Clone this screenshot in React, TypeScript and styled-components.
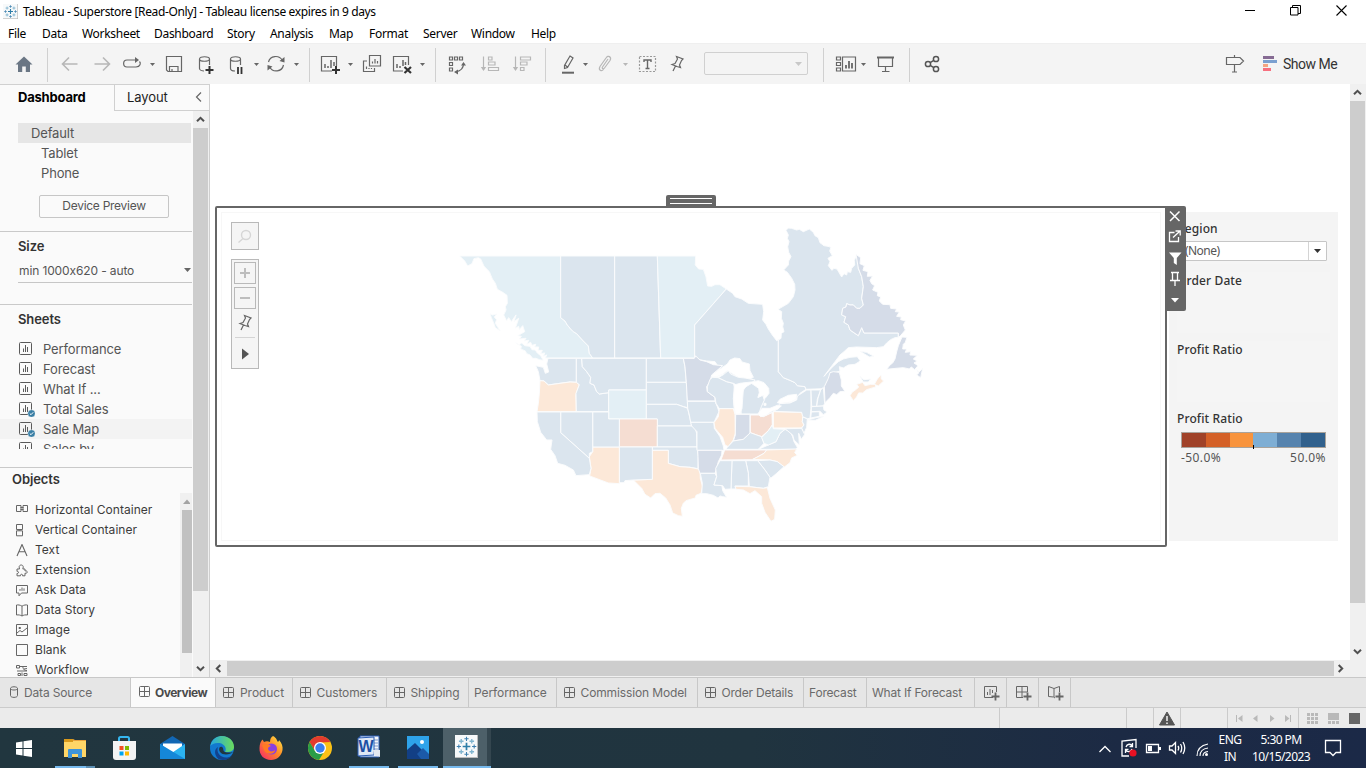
import React from "react";
import styled, { createGlobalStyle, css } from "styled-components";

const ui = `"Noto Sans", "Open Sans", sans-serif`;
const book = `Inter, Roboto, sans-serif`;

const Global = createGlobalStyle`
  * { box-sizing: border-box; }
  body { margin: 0; background: #fff; overflow: hidden; }
  svg { display: block; flex: none; }
`;

/* ---------- window frame ---------- */
const Window = styled.div`
  width: 1366px;
  height: 768px;
  display: flex;
  flex-direction: column;
  background: #fff;
  overflow: hidden;
  font-family: ${book};
  color: #555;
  white-space: nowrap;
`;
const TitleBar = styled.header`
  height: 23px;
  display: flex;
  align-items: center;
  padding: 0 2px 0 3px;
  color: #000;
  font: 12px/22px ${ui};
  letter-spacing: -0.36px;
`;
const Title = styled.span`
  flex: 1;
  margin-left: 5px;
`;
const WinButton = styled.span`
  width: 46px;
  height: 20px;
  display: flex;
  align-items: center;
  justify-content: center;
`;
const MenuBar = styled.nav`
  height: 20px;
  display: flex;
  padding-left: 8px;
  color: #000;
  font: 12px/21px ${ui};
`;
const MenuItem = styled.span<{ $w: number }>`
  width: ${(p) => p.$w}px;
  letter-spacing: -0.3px;
`;

/* ---------- toolbar ---------- */
const Toolbar = styled.div`
  height: 41px;
  display: flex;
  padding: 11px 0 0 14px;
  background: #f4f4f4;
  border-top: 1px solid #efefef;
`;
const Tool = styled.svg.attrs({ height: 20, fill: "none" })<{ $ml?: number; $w?: number; $dim?: boolean }>`
  width: ${(p) => p.$w ?? 20}px;
  margin: -1px 0 0 ${(p) => p.$ml ?? 0}px;
  stroke: ${(p) => (p.$dim ? "#b7b7b7" : "#666")};
  stroke-width: 1.2;
  overflow: visible;
`;
const Divider = styled.span<{ $ml: number }>`
  width: 1px;
  height: 34px;
  margin: -7px 0 0 ${(p) => p.$ml}px;
  background: #d0d0d0;
`;
const Combo = styled.span`
  width: 104px;
  height: 23px;
  margin: -3px 0 0 16px;
  padding: 9px 5px 0 0;
  border: 1px solid #d0d0d0;
  border-radius: 2px;
  display: flex;
  justify-content: flex-end;
`;
const ShowMe = styled.span`
  margin-left: 6px;
  font: 14px/18px Roboto, sans-serif;
  letter-spacing: -0.5px;
  color: #333;
`;

/* ---------- workspace ---------- */
const Workspace = styled.div`
  height: 593px;
  display: flex;
`;
const Sidebar = styled.aside`
  width: 210px;
  display: flex;
  flex-direction: column;
  background: #fafafa;
  border-top: 1px solid #d0d0d0;
  border-right: 1px solid #cfcfcf;
`;
const PaneTabs = styled.div`
  height: 26px;
  display: flex;
  font-size: 13px;
  line-height: 25px;
  color: #1e1e1e;
`;
const PaneTab = styled.div<{ $active?: boolean }>`
  width: ${(p) => (p.$active ? 114 : 95)}px;
  display: flex;
  ${(p) =>
    p.$active
      ? css`
          padding-left: 18px;
          font-weight: 700;
          letter-spacing: -0.2px;
          color: #000;
        `
      : css`
          padding-left: 12px;
          border-left: 1px solid #d0d0d0;
          border-bottom: 1px solid #d0d0d0;
          letter-spacing: -0.1px;
        `}
`;
const PaneBody = styled.div`
  flex: 1;
  display: flex;
  min-height: 0;
`;
const PaneContent = styled.div`
  width: 192px;
  margin-right: 1px;
  display: flex;
  flex-direction: column;
  overflow: hidden;
`;
const Section = styled.section<{ $h: number; $pt?: number }>`
  height: ${(p) => p.$h}px;
  padding-top: ${(p) => p.$pt ?? 0}px;
  border-bottom: 1px solid #c9c9c9;
  overflow: hidden;
  flex: none;
`;
const Device = styled.div<{ $active?: boolean }>`
  height: 20px;
  margin: 0 1px 0 18px;
  padding-left: ${(p) => (p.$active ? 13 : 23)}px;
  background: ${(p) => (p.$active ? "#e6e6e6" : "transparent")};
  font-size: 13px;
  line-height: 20px;
  letter-spacing: -0.15px;
`;
const PreviewButton = styled.div`
  width: 130px;
  height: 23px;
  margin: 12px 0 0 39px;
  border: 1px solid #c6c6c6;
  border-radius: 2px;
  text-align: center;
  font-size: 12px;
  line-height: 20px;
  letter-spacing: -0.28px;
`;
const Heading = styled.h3<{ $ml?: number; $mt?: number }>`
  margin: ${(p) => p.$mt ?? 0}px 0 0 ${(p) => p.$ml ?? 18}px;
  font-size: 13px;
  line-height: 28px;
  font-weight: 600;
  letter-spacing: -0.1px;
  color: #333;
`;
const SizeSelect = styled.div`
  height: 23px;
  margin: 0 0 0 18px;
  padding: 0 1px 2px;
  display: flex;
  justify-content: space-between;
  align-items: center;
  border-bottom: 1px solid #c6c6c6;
  font-size: 12px;
  letter-spacing: -0.12px;
`;
const SheetList = styled.div`
  height: 110px;
  margin-top: 6px;
  overflow: hidden;
`;
const Sheet = styled.div<{ $hover?: boolean }>`
  height: 20px;
  padding-left: 19px;
  display: flex;
  align-items: center;
  gap: 8px;
  background: ${(p) => (p.$hover ? "#f3f3f3" : "transparent")};
  font-size: 13px;
  line-height: 20px;
  letter-spacing: -0.12px;
`;
const ObjectArea = styled.div`
  flex: 1;
  min-height: 0;
  display: flex;
  justify-content: space-between;
`;
const ObjectList = styled.div`
  padding-top: 7px;
`;
const ObjectRow = styled.div`
  height: 20px;
  padding-left: 15px;
  display: flex;
  align-items: center;
  gap: 6px;
  font-size: 12px;
  line-height: 20px;
  letter-spacing: 0.03px;
  color: #3c3c3c;
`;
const VScroll = styled.div<{ $w: number }>`
  width: ${(p) => p.$w}px;
  display: flex;
  flex-direction: column;
  background: #f0f0f0;
`;
const Arrow = styled.span<{ $w?: number; $h?: number; $pr?: number }>`
  width: ${(p) => (p.$w ? p.$w + "px" : "auto")};
  height: ${(p) => p.$h ?? 16}px;
  padding-right: ${(p) => p.$pr ?? 0}px;
  display: flex;
  align-items: center;
  justify-content: center;
`;
const Thumb = styled.span<{ $h?: number; $ml?: number; $mr?: number; $c?: string }>`
  ${(p) => (p.$h ? `height: ${p.$h}px;` : "flex: 1;")}
  margin: 0 ${(p) => p.$mr ?? 0}px 0 ${(p) => p.$ml ?? 0}px;
  background: ${(p) => p.$c ?? "#cdcdcd"};
`;
const Grow = styled.span`
  flex: 1;
`;

/* ---------- dashboard canvas ---------- */
const Main = styled.main`
  flex: 1;
  display: flex;
  flex-direction: column;
`;
const CanvasRow = styled.div`
  height: 576px;
  display: flex;
`;
const Canvas = styled.div`
  width: 1140px;
  display: flex;
  align-items: flex-start;
  padding: 122px 0 0 5px;
`;
const Zone = styled.div`
  position: relative;
  width: 952px;
  height: 341px;
  border: 2px solid #666;
  border-radius: 2px;
`;
const ZoneInner = styled.div`
  height: 329px;
  margin: 4px;
  border: 1px solid #f7f7f7;
`;
const Handle = styled.div`
  position: absolute;
  left: 449px;
  top: -13px;
  width: 50px;
  height: 12px;
  padding: 3px 4px;
  display: flex;
  flex-direction: column;
  justify-content: space-between;
  background: #666;
  border-radius: 2px 2px 0 0;
`;
const HandleLine = styled.span`
  height: 1px;
  background: #fff;
`;
const ZoneTools = styled.div`
  position: absolute;
  left: 948px;
  top: -2px;
  width: 21px;
  height: 105px;
  background: #666;
  border-radius: 0 2px 2px 0;
  z-index: 2;
  display: flex;
  justify-content: center;
`;
const MapControls = styled.div`
  position: absolute;
  left: 14px;
  top: 14px;
  width: 28px;
  display: flex;
  flex-direction: column;
  gap: 9px;
`;
const ControlBox = styled.div<{ $h: number }>`
  height: ${(p) => p.$h}px;
  padding-top: 2px;
  display: flex;
  flex-direction: column;
  align-items: center;
  gap: 3px;
  background: #f5f5f5;
  border: 1px solid #b9b9b9;
`;
const ZoomButton = styled.span`
  width: 22px;
  height: 22px;
  display: flex;
  align-items: center;
  justify-content: center;
  border: 1px solid #b9b9b9;
`;
const ControlRule = styled.span`
  width: 20px;
  height: 1px;
  background: #d4d4d4;
`;
const Filters = styled.div`
  width: 169px;
  height: 329px;
  margin: 6px 0 0 2px;
  padding: 8px 8px 0;
  background: #f4f4f4;
  font-family: ${ui};
`;
const Card = styled.div<{ $h: number }>`
  height: ${(p) => p.$h}px;
  margin-bottom: 8px;
  background: #f5f5f5;
`;
const CardTitle = styled.div`
  font-size: 12px;
  line-height: 18px;
  font-weight: 500;
  letter-spacing: 0.12px;
  color: #333;
`;
const Dropdown = styled.div`
  width: 150px;
  height: 20px;
  margin-top: 3px;
  padding-left: 7px;
  display: flex;
  justify-content: space-between;
  background: #fff;
  border: 1px solid #c6c6c6;
  border-radius: 1px;
  font-size: 12px;
  line-height: 17px;
  letter-spacing: -0.55px;
  color: #555;
`;
const DropArrow = styled.span`
  width: 18px;
  display: flex;
  align-items: center;
  justify-content: center;
  border-left: 1px solid #d4d4d4;
`;
const Ramp = styled.div`
  position: relative;
  width: 145px;
  height: 16px;
  margin: 4px 0 0 4px;
  display: flex;
  border: 1px solid #a9a39b;
`;
const RampStep = styled.span<{ $c: string }>`
  flex: 1;
  background: ${(p) => p.$c};
`;
const RampMark = styled.span`
  position: absolute;
  left: 71px;
  top: 12px;
  width: 1px;
  height: 4px;
  background: #000;
`;
const RampLabels = styled.div`
  width: 145px;
  margin-left: 4px;
  display: flex;
  justify-content: space-between;
  font-size: 12px;
  line-height: 19px;
  letter-spacing: 0.42px;
  color: #555;
`;
const HScroll = styled.div`
  height: 17px;
  display: flex;
  padding: 1px 0;
  background: #f0f0f0;
`;

/* ---------- sheet tabs, status bar ---------- */
const SheetTabs = styled.div`
  height: 31px;
  display: flex;
  background: #e6e6e6;
  border-top: 1px solid #c8c8c8;
  border-bottom: 1px solid #cbcbcb;
`;
const SheetTab = styled.div<{ $w: number; $pl: number; $active?: boolean; $ls?: number }>`
  width: ${(p) => p.$w}px;
  padding-left: ${(p) => p.$pl}px;
  padding-bottom: ${(p) => (p.$active ? 1 : 0)}px;
  display: flex;
  align-items: center;
  gap: ${(p) => (p.$active ? 4 : 5)}px;
  background: ${(p) => (p.$active ? "#fafafa" : "transparent")};
  border-right: 1px solid #c8c8c8;
  font-size: 12px;
  font-weight: ${(p) => (p.$active ? 700 : 400)};
  letter-spacing: ${(p) => p.$ls ?? 0}px;
  color: ${(p) => (p.$active ? "#4b4b4b" : "#6a6a6a")};
`;
const StatusBar = styled.div`
  height: 20px;
  display: flex;
  background: #ebebeb;
`;
const StatusCell = styled.div<{ $w: number }>`
  width: ${(p) => p.$w}px;
  display: flex;
  align-items: center;
  justify-content: center;
  border-right: 1px solid #cbcbcb;
  &:last-child { border: 0; }
`;

/* ---------- Windows taskbar ---------- */
const Taskbar = styled.footer`
  height: 40px;
  display: flex;
  background: linear-gradient(90deg, #21363f 0%, #20343f 55%, #1c2a44 82%, #1b2947 100%);
  color: #fff;
`;
const Start = styled.div`
  width: 50px;
  padding: 12px 0 0 16px;
`;
const TaskItem = styled.div<{ $active?: boolean }>`
  width: 49px;
  display: flex;
  flex-direction: column;
  align-items: center;
  justify-content: space-between;
  padding-top: 7px;
  ${(p) => p.$active && css`background: linear-gradient(90deg, transparent 1px, #4d6069 1px 45px, #34464f 45px);`}
`;
const Underline = styled.span<{ $w: number; $split?: boolean }>`
  width: ${(p) => p.$w}px;
  height: 2px;
  background: ${(p) => (p.$split ? "linear-gradient(90deg, #76b9ed 31px, #5c8fb4 31px)" : "#76b9ed")};
`;
const Tray = styled.div`
  display: flex;
  align-items: center;
  width: 267px;
  margin-left: auto;
`;
const TrayText = styled.div<{ $w: number; $ls: number; $ml: number }>`
  width: ${(p) => p.$w}px;
  margin-left: ${(p) => p.$ml}px;
  font: 12px/17px ${ui};
  letter-spacing: ${(p) => p.$ls}px;
  text-align: center;
`;
const NoticeIcon = styled.svg`
  margin-left: 12px;
`;

/* ---------- small drawings ---------- */
const Caret = ({ c = "#666" }: { c?: string }) => (
  <svg width="7" height="4" viewBox="0 0 7 4">
    <path d="M0 0H7L3.5 4Z" fill={c} />
  </svg>
);
const ToolCaret = ({ ml, dim }: { ml: number; dim?: boolean }) => (
  <Tool $ml={ml} $w={7} viewBox="0 0 7 20">
    <path d="M1 9H6L3.5 12Z" fill={dim ? "#b7b7b7" : "#666"} stroke="none" />
  </Tool>
);
const Chevron = ({ dir }: { dir: "up" | "down" | "left" | "right" }) => {
  const r = { up: 0, right: 90, down: 180, left: 270 }[dir];
  return (
    <svg width="9" height="9" viewBox="0 0 9 9" fill="none" stroke="#505050" strokeWidth="2">
      <path d="M1 6.3L4.5 2.8L8 6.3" transform={`rotate(${r} 4.5 4.5)`} />
    </svg>
  );
};
const SheetGlyph = ({ used }: { used?: boolean }) => (
  <svg width="16" height="16" viewBox="0 0 16 16" fill="none" stroke="#5a5a5a">
    <rect x="0.5" y="1.5" width="12" height="12" rx="1" />
    <path d="M4.5 11V7.5M6.5 11V4M8.5 11V6" />
    {used && (
      <g>
        <circle cx="12.5" cy="12.5" r="3.8" fill="#3a7fa5" stroke="#fafafa" strokeWidth=".5" />
        <path d="M10.8 12.5l1.2 1.2 2.2-2.4" stroke="#fff" />
      </g>
    )}
  </svg>
);
const GridGlyph = () => (
  <svg width="12" height="12" viewBox="0 0 12 12" fill="none" stroke="#666">
    <rect x=".5" y=".5" width="10" height="10" rx="1" />
    <path d="M5.5 0V11M0 5.5H11" />
  </svg>
);
const plus = (x: number, y: number, k: number) => `M${x - k} ${y}H${x + k}M${x} ${y - k}V${y + k}`;
const TableauMark = ({ s }: { s: number }) => (
  <svg width={s} height={s} viewBox="0 0 24 24" fill="none">
    <rect width="24" height="24" fill="#b9b9b9" />
    <rect width="23" height="23" fill="#f7f9fa" />
    <path d={plus(12, 12, 4)} stroke="#2e7ea8" strokeWidth="1.8" />
    <path d={plus(12, 4, 2.2) + plus(12, 20, 2.2) + plus(4, 12, 2.2) + plus(20, 12, 2.2)} stroke="#3d7fae" strokeWidth="1.1" />
    <path d={plus(6.5, 6.5, 2.4) + plus(17.5, 6.5, 2.4) + plus(6.5, 17.5, 2.4) + plus(17.5, 17.5, 2.4)} stroke="#7fb4cf" strokeWidth="1.4" />
  </svg>
);
const pinPath = "M8.500 2.500L15 5L13.500 6.500L11.500 11L12.500 13.500L9 12.500L4 10.500L7 9.500L9.500 5ZM7.500 12L5 17";

const objectGlyphs: Record<string, React.ReactNode> = {
  "Horizontal Container": <path d="M.5 1.500h4.500v6H.5zM7 1.500h4.500v6H7zM4.500 3.500h3M4.500 5.500h3" />,
  "Vertical Container": <path d="M.5 .5h6v5h-6zM.5 6.800h6v5h-6zM2.500 6h2" />,
  Text: <path d="M1 12L6 .5L11 12M3 7.800H9" strokeWidth="1.100" />,
  Extension: <path d="M1 5h2.500C3.500 4.500 3 3.500 3.200 2.500C3.600.5 6.800.5 7.200 2.500C7.400 3.500 7 4.500 6.800 5H9v2c3-1 3 3 0 2.200v2.600H6.500c.8-2-2.600-2-2 0H1V9.400c2 .6 2-2.600 0-2z" />,
  "Ask Data": <path d="M.5 1.500h11v7.500H5.500L3 11.800V9H.5zM4 6.800V5M6 6.800V3.500M8 6.800V4.400" />,
  "Data Story": <path d="M6 2.200C4 .8 2 .8.5 1v10c2-.3 4 0 5.500 1c1.500-1 3.500-1.300 5.500-1V1C10 .8 8 .8 6 2.200zM6 2.200V12" />,
  Image: <path d="M.5.5h11v11H.5zM1 9l3-2.500 2 1.500 5-4M3 3.500h1.500v1H3z" />,
  Blank: <path d="M.5.5h11v11H.5z" />,
  Workflow: <path d="M.5 1.500h3v2.500h-3zM3.500 2.500H11M5.500 2.500c3 0 0 4 5.500 4M11 4.500L8 5M1 7h10M2 9.500h2.500v2H2zM6 8.500v3.500M8 9.500h3v2H8z" />,
};

/* ---------- map ---------- */
const BLUE = "#dbe5ee";
const ICE = "#e3eff5";
const LILAC = "#d5dce8";
const PEACH = "#fce8d8";
const ROSE = "#f5ddd2";
type Shape = [string, string];

const westCanada: Shape[] = [
  [ICE, "29,123 332,123 332,308 345,318 352,330 362,342 370,350 380,356 400,378 415,393 418,415 428,429 286,429 290,420 280,424 284,414 272,416 277,406 264,406 266,396 254,396 257,388 246,391 242,382 230,388 236,376 222,378 228,370 208,372 214,364 203,362 224,350 218,332 208,344 206,334 196,340 206,310 192,320 198,300 184,320 176,308 170,318 161,300 168,285 166,275 172,265 171,241 158,232 142,223 136,205 127,192 118,170 102,154 92,132 85,128 72,131 66,146 53,153 44,138"],
  [ICE, "197,383 206,390 215,384 225,392 240,394 246,404 256,405 262,414 272,422 280,436 268,434 258,430 248,430 240,420 230,416 226,408 212,402 214,394"],
  [ICE, "120,296 128,300 141,297 133,306 140,314 136,325 151,348 136,338 130,322 124,308"],
  [BLUE, "332,123 494,123 494,429 428,429 418,415 415,393 400,378 380,356 370,350 362,342 352,330 345,318 332,308"],
  [BLUE, "494,123 622,123 632,429 494,429"],
];
const eastCanada: Shape[] = [
  [ICE, "-68,123 47,123 46,150 56,162 70,163 78,185 83,213 95,214 105,209 120,209 139,222 44,330 44,429 -58,429"],
  [BLUE, "139,222 158,235 165,245 185,252 205,265 248,268 251,290 248,315 258,328 265,342 277,360 290,377 295,374 295,470 310,488 330,496 345,503 352,512 375,515 378,523 360,535 355,545 302,580 262,600 235,590 200,540 210,500 130,480 105,440 80,438 62,435 50,434 47,424 44,424 44,330"],
  [BLUE, "318,46 325,39 335,40 350,45 358,43 370,50 388,42 400,52 405,62 415,68 420,83 432,92 444,94 453,97 449,108 457,122 444,130 450,140 445,152 456,166 462,160 471,162 485,186 492,176 500,180 502,170 512,172 515,160 524,150 523,136 530,120 537,130 535,160 545,185 550,215 545,250 550,270 540,280 530,280 520,270 510,270 500,266 498,276 488,280 485,300 497,305 492,322 505,330 510,345 535,362 545,338 552,354 655,354 655,367 645,368 632,374 620,384 610,395 590,398 530,396 505,398 492,410 480,420 465,440 432,484 455,458 475,440 490,432 510,427 532,425 541,438 525,448 505,450 490,459 478,455 480,468 460,475 447,495 437,515 430,521 378,523 375,515 352,512 345,503 330,496 310,488 295,470 295,375 303,370 304,355 312,350 308,335 310,325 304,310 305,290 294,283 325,265 340,245 345,225 344,208 335,190 322,172 311,165 325,150 326,138 333,125 326,112 323,95 327,80 322,70 325,60"],
  [BLUE, "540,409 560,412 582,424 568,426"],
  [BLUE, "540,484 552,494 572,492 565,501 550,501"],
  [LILAC, "528,118 542,128 540,146 553,152 549,166 564,170 562,184 578,183 570,196 575,206 584,212 578,225 594,232 592,242 602,246 598,258 608,268 630,269 632,280 650,282 646,290 658,291 650,304 664,306 662,314 677,318 670,330 676,345 660,364 655,366 655,354 552,354 545,338 535,362 510,345 505,330 492,322 497,305 485,300 488,280 498,276 500,266 510,270 520,270 530,280 540,280 550,270 545,250 550,215 545,185 535,160"],
  [LILAC, "666,366 681,367 676,382 670,388 668,402 680,402 676,412 692,410 690,420 712,421 700,432 712,438 702,444 714,452 704,464 694,456 688,462 670,458 648,460 620,463 630,450 638,444 645,432 650,410 655,392"],
  [LILAC, "710,463 716,472 728,460 722,488 710,480 716,474"],
  [PEACH, "510,542 516,532 530,522 536,516 530,508 548,502 555,512 572,508 586,508 587,516 560,524 548,534 536,534 530,546 520,557"],
  [PEACH, "583,508 592,492 603,479 604,492 611,498 595,513"],
];
const westStates: Shape[] = [
  [BLUE, "84,55 169,55 169,127 150,126 120,130 85,135 72,123 60,122 55,95 47,77 70,82 76,100 86,96 80,72"],
  [PEACH, "60,122 72,123 85,135 120,130 150,126 169,127 178,134 170,155 168,165 169,215 51,215 55,190 58,160"],
  [BLUE, "169,55 185,55 187,80 200,95 212,112 210,130 222,135 230,155 238,162 266,158 266,215 169,215 168,160 178,134 169,127"],
  [BLUE, "185,55 379,55 379,150 266,150 266,158 238,162 230,155 222,135 210,130 212,112 200,95 187,80"],
  [ICE, "266,150 379,150 379,237 266,237"],
  [BLUE, "379,55 490,55 495,80 499,127 379,127"],
  [BLUE, "379,127 499,127 501,150 503,203 490,200 470,193 379,193"],
  [BLUE, "379,193 470,193 490,200 503,205 510,235 515,258 412,258 412,237 379,237"],
  [ROSE, "298,237 412,237 412,321 298,321"],
  [BLUE, "412,258 515,258 525,264 530,280 531,321 412,321"],
  [BLUE, "397,321 531,321 535,350 534,386 510,382 480,380 445,370 445,331 397,331"],
  [PEACH, "397,331 445,331 445,370 480,380 510,382 540,388 541,415 548,440 543,460 528,466 526,474 515,477 498,482 490,490 484,505 487,529 475,527 458,519 450,495 437,474 420,460 405,461 392,474 375,463 365,445 340,420 397,418"],
  [BLUE, "298,321 397,321 397,418 342,420 315,422 312,428 298,428"],
  [PEACH, "218,321 298,321 298,431 265,429 209,408 213,385 208,350 218,335"],
  [BLUE, "218,216 266,216 266,237 298,237 298,321 218,321"],
  [BLUE, "122,216 218,216 218,335 208,340 208,355 122,278"],
  [BLUE, "51,216 122,216 122,278 208,355 213,385 208,404 168,407 160,390 135,376 113,370 105,347 92,328 96,300 80,300 62,277 52,245"],
  [LILAC, "490,55 523,55 527,48 540,60 560,65 580,74 608,77 575,105 570,125 560,140 562,155 585,172 585,183 502,183 499,127 495,80"],
  [BLUE, "502,184 585,184 592,200 597,215 590,230 582,247 512,247 508,225 503,205"],
  [BLUE, "512,247 582,247 583,265 600,290 610,318 612,331 531,331 531,275 515,258"],
  [LILAC, "533,331 606,331 605,345 595,365 590,385 585,400 540,400 535,386 534,350"],
  [BLUE, "541,400 585,400 590,410 582,435 606,437 608,452 620,472 608,470 600,468 594,474 580,466 560,461 545,461 547,430"],
];
const eastStates: Shape[] = [
  [BLUE, "52,140 60,118 68,112 85,113 110,125 130,130 135,145 130,175 133,206 88,206 78,190 75,172 52,155"],
  [BLUE, "85,113 100,104 115,92 122,102 145,112 165,114 195,120 190,128 160,130 145,138 130,130 110,125"],
  [BLUE, "154,222 150,195 153,165 165,140 180,128 198,136 210,148 210,160 204,172 216,164 224,178 214,200 206,222"],
  [PEACH, "88,206 130,206 135,222 136,280 130,300 115,320 105,315 98,292 75,265 72,248 85,230"],
  [LILAC, "137,223 180,223 180,280 160,298 130,303 136,285"],
  [ROSE, "181,225 205,225 220,230 246,218 247,255 235,272 215,290 200,285 181,278"],
  [PEACH, "250,215 335,217 340,230 337,245 342,255 335,264 250,264"],
  [BLUE, "108,328 112,322 130,303 160,298 181,278 200,285 215,290 222,310 205,328"],
  [BLUE, "205,328 235,315 258,305 270,280 285,268 300,275 308,290 312,305 322,322 318,328"],
  [BLUE, "285,266 335,265 345,282 334,298 326,280 328,315 312,300 308,285"],
  [ICE, "247,255 250,266 285,268 270,280 258,305 235,315 222,310 215,293 235,272"],
  [BLUE, "338,231 352,236 350,262 342,280 335,264 342,255 337,245"],
  [BLUE, "250,214 265,205 268,191 300,189 320,180 322,168 350,150 363,150 363,205 360,235 352,236 338,230 335,217"],
  [BLUE, "363,150 392,150 382,178 380,199 365,199"],
  [BLUE, "392,150 400,142 404,190 400,198 380,199 384,175"],
  [BLUE, "364,200 400,198 402,210 412,216 400,224 390,214 364,215"],
  [BLUE, "364,216 388,215 388,229 362,234"],
  [BLUE, "352,240 378,233 402,229 376,241"],
  [LILAC, "405,188 403,140 415,115 420,98 430,95 448,97 454,120 454,138 465,154 450,155 440,164 430,160 420,173"],
  [ROSE, "104,330 230,330 222,340 204,350 188,359 93,360"],
  [PEACH, "230,330 320,327 314,338 322,346 305,354 300,368 282,382 262,365 240,360 188,358 204,350 222,340"],
  [BLUE, "203,362 240,360 262,365 282,380 260,400 242,415 225,390"],
  [BLUE, "167,362 203,362 225,390 240,412 235,440 220,445 178,440 175,400"],
  [BLUE, "126,362 167,362 175,400 175,438 135,438 140,447 123,447"],
  [BLUE, "90,362 126,362 123,447 105,448 98,437 72,435 80,410 77,385"],
  [PEACH, "135,439 178,440 220,445 232,443 240,475 256,510 254,538 243,544 225,517 215,490 215,470 195,452 180,461 160,450 138,448"],
];
const superior: Shape = ["#fff", "60,112 74,98 95,84 112,72 120,60 134,54 150,56 156,66 178,72 180,92 190,112 172,120 145,112 126,100 112,92 98,102 80,110"];
const lakes: Shape[] = [
  ["#fff", "133,135 150,130 185,126 205,122 222,128 236,145 237,160 228,172 222,178 220,165 210,170 204,172 208,158 206,145 185,130 168,140 160,150 158,175 156,205 150,222 136,222 132,195 131,170"],
  ["#fff", "204,222 216,205 240,205 262,196 274,198 262,208 245,214 228,226 212,230"],
  ["#fff", "262,188 270,178 295,166 320,163 318,178 300,186 272,190"],
  ["#fff", "222,190 228,190 228,196 222,196"],
];
const Region = ({ items, x, y }: { items: Shape[]; x: number; y: number }) => (
  <g transform={`translate(${x} ${y}) scale(.33333)`}>
    {items.map(([fill, pts], i) => (
      <polygon key={i} points={pts} fill={fill} />
    ))}
  </g>
);
const RegionMap = () => (
  <svg width="938" height="327" viewBox="222 213 938 327" stroke="#fbfcfd" strokeWidth="3" strokeLinejoin="round">
    <Region items={westCanada} x={450} y={215} />
    <Region items={eastCanada} x={680} y={215} />
    <Region items={[superior]} x={690} y={340} />
    <Region items={westStates} x={520} y={340} />
    <Region items={eastStates} x={690} y={340} />
    <Region items={lakes} x={690} y={340} />
  </svg>
);

const menus: [string, number][] = [
  ["File", 34], ["Data", 40], ["Worksheet", 72], ["Dashboard", 73], ["Story", 43], ["Analysis", 59],
  ["Map", 40], ["Format", 54], ["Server", 48], ["Window", 60], ["Help", 40],
];
const tabs: { label: string; w: number; pl?: number; grid?: boolean; active?: boolean; ls?: number }[] = [
  { label: "Overview", w: 85, pl: 8, grid: true, active: true, ls: -0.5 },
  { label: "Product", w: 77, grid: true, pl: 7, ls: -0.05 },
  { label: "Customers", w: 94, grid: true, ls: -0.1 },
  { label: "Shipping", w: 82, grid: true, ls: -0.1 },
  { label: "Performance", w: 88, pl: 5, ls: -0.08 },
  { label: "Commission Model", w: 141, grid: true, ls: -0.13 },
  { label: "Order Details", w: 106, grid: true, ls: -0.2 },
  { label: "Forecast", w: 63, pl: 5, ls: -0.2 },
  { label: "What If Forecast", w: 108, pl: 5, ls: -0.2 },
];

export default function App() {
  return (
    <Window>
      <Global />
      <TitleBar>
        <TableauMark s={15} />
        <Title>Tableau - Superstore [Read-Only] - Tableau license expires in 9 days</Title>
        <WinButton><svg width="11" height="11" stroke="#000"><path d="M1 4.500H11" /></svg></WinButton>
        <WinButton>
          <svg width="11" height="13" fill="none" stroke="#000"><path d="M.5 2.500h7.500v7.500H.5zM2.500 2.500V.5h8v8H8" /></svg>
        </WinButton>
        <WinButton><svg width="11" height="13" stroke="#000" strokeWidth="1.100"><path d="M.5.5L10.500 10.500M10.500.5L.5 10.500" /></svg></WinButton>
      </TitleBar>
      <MenuBar>
        {menus.map(([m, w]) => <MenuItem key={m} $w={w}>{m}</MenuItem>)}
      </MenuBar>

      <Toolbar>
        <Tool viewBox="0 0 20 20"><path d="M10 2.500L18.500 10.500H16V18H11.800V12.500H8.200V18H4V10.500H1.500Z" fill="#6a7684" stroke="none" /></Tool>
        <Divider $ml={13} />
        <Tool $ml={12} $dim viewBox="0 0 20 20"><path d="M17.500 10H3M9 3.500L2.500 10L9 16.500" strokeWidth="1.600" /></Tool>
        <Tool $ml={12} $dim viewBox="0 0 20 20"><path d="M2.500 10H17M11 3.500L17.500 10L11 16.500" strokeWidth="1.600" /></Tool>
        <Tool $ml={10} viewBox="0 0 20 20">
          <path d="M14 6H5C.5 6 .5 13 5 13H14C18.500 13 19 9 17.500 7.500" /><path d="M13 3L17 6L13 9Z" fill="#666" stroke="none" />
        </Tool>
        <ToolCaret ml={7} />
        <Tool $ml={8} viewBox="0 0 20 20"><path d="M2.500 2.500H17.500V17.500H4L2.500 16ZM5.500 17.500V12.500H14V17.500M8 15V17.500" /></Tool>
        <Tool $ml={12} viewBox="0 0 20 20">
          <path d="M3.500 5V14.500C3.500 16 6 17 8 17M13.500 5V11M3.500 5C3.500 2 13.500 2 13.500 5C13.500 8 3.500 8 3.500 5Z" />
          <path d="M13.500 12V20M9.500 16H17.500" stroke="#333" strokeWidth="2" />
        </Tool>
        <Tool $ml={12} viewBox="0 0 20 20">
          <path d="M2.500 5V14.500C2.500 16 4 17 7 17M12.500 5V11M2.500 5C2.500 2 12.500 2 12.500 5C12.500 8 2.500 8 2.500 5Z" />
          <path d="M10 13V20M13.500 13V20" stroke="#333" strokeWidth="1.800" />
        </Tool>
        <ToolCaret ml={5} />
        <Tool $ml={6} viewBox="0 0 20 20">
          <path d="M2.500 8C4 1.500 13 .5 16.500 6.500M17.500 11C16 18 7 19 3.500 13" />
          <path d="M18.500 3V8.500L13.500 7ZM1.500 16.500V11L6.500 12.500Z" fill="#666" stroke="none" />
        </Tool>
        <ToolCaret ml={7} />
        <Divider $ml={9} />
        <Tool $ml={10} $w={22} viewBox="0 0 22 20">
          <path d="M12 17H1.500V2.500H16.500V12" /><path d="M5 14V10M8 14V12M11 14V6M14 12V8" strokeWidth="1.500" />
          <path d="M16 12V20M12 16H20" stroke="#333" strokeWidth="2" />
        </Tool>
        <ToolCaret ml={5} />
        <Tool $ml={8} viewBox="0 0 20 20">
          <path d="M7.500 1.500H18.500V12H7.500ZM5 7H1.500V17.500H12.500V14M10.500 9.500V7.500M13 9.500V5M15.500 9.500V7M4.500 15V12.500M7 15V14M9.500 15V14" />
        </Tool>
        <Tool $ml={10} $w={22} viewBox="0 0 22 20">
          <path d="M11 17H1.500V2.500H16.500V11" /><path d="M5 14V10M8 14V12M11 12V6M13.500 11V8" strokeWidth="1.500" />
          <path d="M12.500 13L19 19M19 13L12.500 19" stroke="#333" strokeWidth="2.200" />
        </Tool>
        <ToolCaret ml={5} />
        <Divider $ml={9} />
        <Tool $ml={11} viewBox="0 0 20 20">
          <path d="M2.500 3H5.500V6H2.500ZM7.500 3H10.500V6H7.500ZM12.500 3H15.500V6H12.500ZM2.500 8.500H5.500V11.500H2.500ZM2.500 14H5.500V17H2.500ZM16.500 9.500C16.500 14 13.500 17 9 18" />
          <path d="M14 11.500L16.500 8L19 11.500ZM11 15.500L7 18L11 20.500Z" fill="#666" stroke="none" />
        </Tool>
        <Tool $ml={13} $dim viewBox="0 0 20 20">
          <path d="M3.500 2.500V15M8.500 3H12V6H8.500ZM8.500 8H15V11H8.500ZM8.500 13.500H18.500V16.500H8.500Z" /><path d="M.8 13H6.200L3.500 17Z" fill="#b7b7b7" stroke="none" />
        </Tool>
        <Tool $ml={12} $dim viewBox="0 0 20 20">
          <path d="M3.500 2.500V15M8.500 3H18.500V6H8.500ZM8.500 8H15V11H8.500ZM8.500 13.500H12V16.500H8.500Z" /><path d="M.8 13H6.200L3.500 17Z" fill="#b7b7b7" stroke="none" />
        </Tool>
        <Divider $ml={13} />
        <Tool $ml={12} viewBox="0 0 20 20">
          <path d="M12 2L15 4L9.500 13.500L6.500 14.500V11.500ZM7 11L9.500 13" /><path d="M4 18.700H16" strokeWidth="2" />
        </Tool>
        <ToolCaret ml={4} />
        <Tool $ml={6} $dim viewBox="0 0 20 20">
          <path d="M13 5L7.500 13C6.500 14.500 8.500 15.500 9.500 14L15 6.500C17 3 13 .5 11 4L5 12.500C3 16 6.500 18 8.500 15.500" />
        </Tool>
        <ToolCaret ml={7} dim />
        <Tool $ml={9} viewBox="0 0 20 20">
          <path d="M1.500 2.500H17.500V17.500H1.500Z" stroke="#999" strokeDasharray="2 1.500" /><path d="M6 8V6H13V8M9.500 6V14.500M7.500 14.500H11.500" strokeWidth="1.400" />
        </Tool>
        <Tool $ml={10} viewBox="0 0 20 20"><path d={pinPath} /></Tool>
        <Combo><Caret c="#c8c8c8" /></Combo>
        <Divider $ml={15} />
        <Tool $ml={12} viewBox="0 0 20 20">
          <path d="M.5 3H4.500V6H.5ZM.5 8.500H4.500V11.500H.5ZM.5 14H4.500V17H.5ZM6.500 3H19.500V17H6.500Z" /><path d="M10 14.500V11M13 14.500V7M16 14.500V9" strokeWidth="1.800" />
        </Tool>
        <ToolCaret ml={4} />
        <Tool $ml={8} viewBox="0 0 20 20">
          <path d="M3.500 4V12.500H17.500V4M10.500 12.500V17.500M7 17.500H14.500" /><path d="M2 3.500H19" strokeWidth="2" />
        </Tool>
        <Divider $ml={14} />
        <Tool $ml={12} viewBox="0 0 20 20">
          <g strokeWidth="1.500" stroke="#555"><circle cx="6" cy="10" r="2.600" /><circle cx="14" cy="5" r="2.600" /><circle cx="14" cy="15" r="2.600" /><path d="M8.200 8.600L11.800 6.400M8.200 11.400L11.800 13.600" /></g>
        </Tool>
        <Tool $ml={283} viewBox="0 0 20 20"><path d="M1.500 3.500H15L18.500 7L15 10.500H1.500ZM9.500 1V3.500M9.500 10.500V18M7 18H12" /></Tool>
        <Tool $ml={18} $w={14} viewBox="0 0 14 20">
          <g stroke="none"><path d="M0 2h11v3H0z" fill="#866b93" /><path d="M0 6h14v3H0z" fill="#7ba0d0" /><path d="M0 10h5v3H0z" fill="#f4a582" /><path d="M0 14h8v3H0z" fill="#f7707f" /></g>
        </Tool>
        <ShowMe>Show Me</ShowMe>
      </Toolbar>

      <Workspace>
        <Sidebar>
          <PaneTabs>
            <PaneTab $active>Dashboard</PaneTab>
            <PaneTab>
              Layout<Grow />
              <svg width="14" height="24" fill="none" stroke="#666" strokeWidth="1.200"><path d="M6 7.500L1.500 12L6 16.500" /></svg>
            </PaneTab>
          </PaneTabs>
          <PaneBody>
            <PaneContent>
              <Section $h={121} $pt={12}>
                <Device $active>Default</Device>
                <Device>Tablet</Device>
                <Device>Phone</Device>
                <PreviewButton>Device Preview</PreviewButton>
              </Section>
              <Section $h={73}>
                <Heading>Size</Heading>
                <SizeSelect>min 1000x620 - auto<Caret /></SizeSelect>
              </Section>
              <Section $h={163}>
                <Heading>Sheets</Heading>
                <SheetList>
                  <Sheet><SheetGlyph />Performance</Sheet>
                  <Sheet><SheetGlyph />Forecast</Sheet>
                  <Sheet><SheetGlyph />What If ...</Sheet>
                  <Sheet><SheetGlyph used />Total Sales</Sheet>
                  <Sheet $hover><SheetGlyph used />Sale Map</Sheet>
                  <Sheet><SheetGlyph />Sales by...</Sheet>
                </SheetList>
              </Section>
              <Heading $ml={12} $mt={-3}>Objects</Heading>
              <ObjectArea>
                <ObjectList>
                  {Object.keys(objectGlyphs).map((k) => (
                    <ObjectRow key={k}>
                      <svg width="14" height="13" viewBox="-1 0 14 13" fill="none" stroke="#666">{objectGlyphs[k]}</svg>
                      {k}
                    </ObjectRow>
                  ))}
                </ObjectList>
                <VScroll $w={12}>
                  <Arrow $h={17}><svg width="8" height="5"><path d="M1 5L5 .5L9 5Z" fill="#a3a3a3" /></svg></Arrow>
                  <Thumb $h={143} $ml={2} $c="#c1c1c1" />
                </VScroll>
              </ObjectArea>
            </PaneContent>
            <VScroll $w={16}>
              <Arrow $h={17} $pr={1}><Chevron dir="up" /></Arrow>
              <Thumb $h={463} $mr={1} />
              <Grow />
              <Arrow $h={17} $pr={1}><Chevron dir="down" /></Arrow>
            </VScroll>
          </PaneBody>
        </Sidebar>

        <Main>
          <CanvasRow>
            <Canvas>
              <Zone>
                <ZoneInner><RegionMap /></ZoneInner>
                <Handle><HandleLine /><HandleLine /></Handle>
                <MapControls>
                  <ControlBox $h={28}>
                    <svg width="20" height="22" fill="none" stroke="#d6d6d6" strokeWidth="1.400"><circle cx="11" cy="10" r="4.500" /><path d="M8 13.500L3.500 17.500" /></svg>
                  </ControlBox>
                  <ControlBox $h={110}>
                    <ZoomButton><svg width="10" height="10" stroke="#bdbdbd" strokeWidth="2"><path d="M0 5H10M5 0V10" /></svg></ZoomButton>
                    <ZoomButton><svg width="10" height="10" stroke="#bdbdbd" strokeWidth="2"><path d="M0 5H10" /></svg></ZoomButton>
                    <svg width="18" height="22" viewBox="0 -1 18 22" fill="none" stroke="#666" strokeWidth="1.200"><path d={pinPath} /></svg>
                    <ControlRule />
                    <svg width="18" height="25"><path d="M6 7.500V18.500L13 13Z" fill="#555" /></svg>
                  </ControlBox>
                </MapControls>
                <ZoneTools>
                  <svg width="21" height="105" fill="none" stroke="#fff" strokeWidth="1.300">
                    <path d="M5 5.500L14.500 15M14.500 5.500L5 15" strokeWidth="1.500" />
                    <path d="M9.500 26.500H4.500V35.500H13.500V31M8 31.500L14.500 25.500M10.500 25H15.200V29.500" />
                    <path d="M4 46.500H16.500L11.800 52V59L8.800 57V52Z" fill="#fff" stroke="none" />
                    <path d="M6 66.500H14M7.500 66.500V74M12.500 66.500V74M5 74.500H15M10 74.500V80" />
                    <path d="M6 92H14L10 96.500Z" fill="#fff" stroke="none" />
                  </svg>
                </ZoneTools>
              </Zone>
              <Filters>
                <Card $h={44}>
                  <CardTitle>Region</CardTitle>
                  <Dropdown>(None)<DropArrow><Caret c="#333" /></DropArrow></Dropdown>
                </Card>
                <Card $h={61}><CardTitle>Order Date</CardTitle></Card>
                <Card $h={61}><CardTitle>Profit Ratio</CardTitle></Card>
                <CardTitle>Profit Ratio</CardTitle>
                <Ramp>
                  {["#a04228", "#d46027", "#f8943d", "#7eaed4", "#5683ae", "#31618d"].map((c) => <RampStep key={c} $c={c} />)}
                  <RampMark />
                </Ramp>
                <RampLabels><span>-50.0%</span><span>50.0%</span></RampLabels>
              </Filters>
            </Canvas>
            <VScroll $w={16}>
              <Arrow $h={17} $pr={1}><Chevron dir="up" /></Arrow>
              <Thumb $h={502} $mr={1} />
              <Grow />
              <Arrow $h={17} $pr={1}><Chevron dir="down" /></Arrow>
            </VScroll>
          </CanvasRow>
          <HScroll>
            <Arrow $w={17} $h={15}><Chevron dir="left" /></Arrow>
            <Thumb />
            <Arrow $w={14} $h={15} $pr={1}><Chevron dir="right" /></Arrow>
            <Arrow $w={18} $h={15} />
          </HScroll>
        </Main>
      </Workspace>

      <SheetTabs>
        <SheetTab $w={131} $pl={9} $ls={-0.15}>
          <svg width="10" height="14" fill="none" stroke="#666"><path d="M1.500 2.500V9.500C1.500 12 8.500 12 8.500 9.500V2.500M1.500 2.500C1.500 .2 8.500 .2 8.500 2.500C8.500 4.500 1.500 4.500 1.500 2.500Z" /></svg>
          Data Source
        </SheetTab>
        {tabs.map((t) => (
          <SheetTab key={t.label} $w={t.w} $pl={t.pl ?? 6.5} $active={t.active} $ls={t.ls}>
            {t.grid && <GridGlyph />}{t.label}
          </SheetTab>
        ))}
        <SheetTab $w={32} $pl={9}>
          <svg width="16" height="16" fill="none" stroke="#666"><path d="M9 12.500H.5V1.500H12.500V7M3.500 10V7M6 10V4M8.500 8V5" /><path d={plus(11.5, 11.5, 4)} strokeWidth="1.800" /></svg>
        </SheetTab>
        <SheetTab $w={32} $pl={9}>
          <svg width="16" height="16" fill="none" stroke="#666"><path d="M7 12.500H.5V1.500H11.500V7M6 1.500V12.500M.5 7H11.500" /><path d={plus(11.5, 11.5, 4)} strokeWidth="1.800" /></svg>
        </SheetTab>
        <SheetTab $w={32} $pl={9}>
          <svg width="16" height="16" fill="none" stroke="#666"><path d="M7 13L5.500 12L.5 11.500V1.500L6 3.500L11.500 1.500V7M6 3.500V12" /><path d={plus(11.5, 11.5, 4)} strokeWidth="1.800" /></svg>
        </SheetTab>
      </SheetTabs>

      <StatusBar>
        <StatusCell $w={1000} />
        <StatusCell $w={127} />
        <StatusCell $w={27} />
        <StatusCell $w={27}>
          <svg width="16" height="15"><path d="M8 1L15.500 14H.5Z" fill="#555" stroke="#555" strokeLinejoin="round" /><path d="M8 5V10M8 11.500V13" stroke="#fff" strokeWidth="1.400" /></svg>
        </StatusCell>
        <StatusCell $w={47} />
        <StatusCell $w={71}>
          <svg width="56" height="9" fill="#b9b9b9"><path d="M1 1h1v7H1zM7.500 1v7L3 4.500zM22.500 1v7L18 4.500zM35 1v7L39.500 4.500zM50 1v7L54.500 4.500zM55 1h1v7H55z" /></svg>
        </StatusCell>
        <StatusCell $w={67}>
          <svg width="54" height="11" fill="#b9b9b9">
            <path d="M1 0h3v3H1zM5 0h3v3H5zM9 0h3v3H9zM1 4h3v3H1zM5 4h3v3H5zM9 4h3v3H9zM1 8h3v3H1zM5 8h3v3H5zM9 8h3v3H9zM22 0h11v7H22zM22 8h3v3H22zM26 8h3v3H26zM30 8h3v3H30z" />
            <path d="M43 0h11v11H43z" fill="#666" />
          </svg>
        </StatusCell>
      </StatusBar>

      <Taskbar>
        <Start>
          <svg width="16" height="17" viewBox="0 0 16 17" fill="#fff"><path d="M0 2.500L6.500 1.500V8H0zM7.500 1.300L16 0V8H7.500zM0 9H6.500V15.500L0 14.500zM7.500 9H16V17L7.500 15.700z" /></svg>
        </Start>
        <TaskItem>
          <svg width="24" height="24"><path d="M1 4h9l2 1H23v17H1z" fill="#e8a33d" /><path d="M1 6H23V22H1z" fill="#ffd667" /><path d="M1 4h9v3H1z" fill="#d99a1c" /><path d="M5 15q0-1 1-1H18q1 0 1 1v8H15v-4H9v4H5z" fill="#3f94d8" /></svg>
          <Underline $w={40} $split />
        </TaskItem>
        <TaskItem>
          <svg width="24" height="26"><path d="M7 7V3.500q0-1.500 1.500-1.500h7Q17 2 17 3.500V7" fill="none" stroke="#35b6ef" strokeWidth="2" /><path d="M1 6H24V22q0 3-3 3H4q-3 0-3-3z" fill="#f3f3f3" /><path d="M7.500 11h4v4h-4z" fill="#f25022" /><path d="M13 11h4v4h-4z" fill="#7fba00" /><path d="M7.500 16.500h4v4h-4z" fill="#00a4ef" /><path d="M13 16.500h4v4h-4z" fill="#ffb900" /></svg>
        </TaskItem>
        <TaskItem>
          <svg width="25" height="25"><path d="M0 9L12.500 1L25 9V24H0z" fill="#1267b4" /><path d="M3 8.500H22V15L12.500 19 3 15z" fill="#fff" /><path d="M0 9L12.500 17.500L25 9V24H0z" fill="#2bb3f0" /><path d="M0 9L25 24H0z" fill="#1587d8" /></svg>
        </TaskItem>
        <TaskItem>
          <svg width="26" height="26">
            <defs><linearGradient id="edge"><stop stopColor="#26a8e0" /><stop offset="1" stopColor="#6bdc5b" /></linearGradient></defs>
            <circle cx="13" cy="13" r="12" fill="#1279cf" />
            <path d="M1.200 11C3 3 9 1 13 1C20 1 25 6 25 12C25 16 21 17.500 16 17C18 14 16 9 10.500 8C6 7.500 2.500 9 1.200 11Z" fill="url(#edge)" />
            <path d="M9 12C7 17 11 23 18 22.500C20 22.500 22 21.500 23.500 20C20 25 14 26 9.500 24C5 20 5 14 9 12Z" fill="#13428c" />
            <path d="M10.500 12.500C9 16 12 19.500 17 19.500C20 19.500 22 18.500 24.200 17C22 17.500 19 18 16 17C13.500 16 15 13 13 12C12 11.500 11 11.800 10.500 12.500Z" fill="#21363f" />
          </svg>
        </TaskItem>
        <TaskItem>
          <svg width="26" height="26">
            <defs><linearGradient id="fx" x1="1" y1="0" x2="0" y2="1"><stop stopColor="#fff14a" /><stop offset=".45" stopColor="#ff8a26" /><stop offset="1" stopColor="#f5216f" /></linearGradient></defs>
            <path d="M15 1C19 3 19 6 20 7C21 6 21 5 21 5C24 8 25 12 24.500 15C23.500 21 19 25 13 25C6 25 1 20 1.500 13C1.500 9 3 6 4.500 4.500L6 7C8 6 10 6 12 7C12 4 13 2 15 1Z" fill="url(#fx)" />
            <circle cx="13.500" cy="14" r="5.500" fill="#8a3fe0" /><path d="M4 10C8 8 11 9 13 11C11 12 10 12 10 14C11 17 15 17 17 15C17 20 8 20 6 15Z" fill="#ff7a24" />
          </svg>
        </TaskItem>
        <TaskItem>
          <svg width="26" height="26">
            <circle cx="13" cy="13" r="12" fill="#fbc116" />
            <path d="M2.600 7A12 12 0 0 1 23.400 7L13 7.500L8 16Z" fill="#e33b2e" />
            <path d="M2.600 7A12 12 0 0 0 12 25L17.500 16L8 16Z" fill="#2a9d48" />
            <circle cx="13" cy="13" r="6" fill="#fff" /><circle cx="13" cy="13" r="4.700" fill="#3a7ff0" />
          </svg>
        </TaskItem>
        <TaskItem>
          <svg width="24" height="24">
            <path d="M3 1H22V22H3z" fill="#f2f5fa" stroke="#2a5db5" />
            <path d="M16 5h5M17 8h4M17 11h4M17 14h4" stroke="#7d99cc" />
            <path d="M1 3L17 2V20L1 21z" fill="#dfe8f6" stroke="#2a5db5" />
            <path d="M16 15h7v7l-6-2z" fill="#e3e8ef" />
            <text x="1.500" y="17" fontFamily="Liberation Sans, sans-serif" fontWeight="700" fontSize="16" fill="#1d4fa3">W</text>
          </svg>
          <Underline $w={40} />
        </TaskItem>
        <TaskItem>
          <svg width="24" height="24"><path d="M1 1H23V24H1z" fill="#2ea3ea" /><path d="M1 15L9 8L23 22V24H1z" fill="#123f85" /><path d="M11 19L17 13L23 19V24H15z" fill="#1c5aa8" /><circle cx="16" cy="7" r="2" fill="#fff" /></svg>
          <Underline $w={40} />
        </TaskItem>
        <TaskItem $active>
          <TableauMark s={23} />
          <Underline $w={48} />
        </TaskItem>
        <Tray>
          <svg width="110" height="22" viewBox="1099 737 110 22" fill="none" stroke="#fff" strokeWidth="1.300">
            <path d="M1099.500 752L1105 746.500L1110.500 752" />
            <path d="M1129 756H1122V741L1136 739.500V748" />
            <path d="M1126 747C1127 743.500 1131 743.500 1132 746M1132 749C1131 752 1127 752.500 1126 750M1132.500 743V746.500H1129.500M1125.500 753V749.500H1128.500" />
            <circle cx="1133" cy="753" r="3.600" fill="#e81123" stroke="none" />
            <path d="M1146.500 744.500H1158.500V752.500H1146.500Z" /><path d="M1148 746H1152V751H1148ZM1159 747H1161V750H1159Z" fill="#fff" stroke="none" />
            <path d="M1169.500 746V750H1172L1175.500 753.500V742.500L1172 746ZM1178 746Q1179.500 748 1178 750.500M1180.500 744Q1183 748 1180.500 752.500M1183 742Q1186.500 748 1183 754" />
            <path d="M1197 756Q1197 746 1208 744M1200 756Q1200 749 1208 748M1203 756Q1203 752 1208 751.500" strokeWidth="1.100" /><circle cx="1206.500" cy="754.500" r="1.500" fill="#fff" stroke="none" />
          </svg>
          <TrayText $w={24} $ml={9} $ls={-0.5}>ENG<br />IN</TrayText>
          <TrayText $w={62} $ml={8} $ls={-0.6}>5:30 PM<br />10/15/2023</TrayText>
          <NoticeIcon width="18" height="18" fill="none" stroke="#fff" strokeWidth="1.300"><path d="M1.500 1.500H16.500V13.500H12L9 16.500L6 13.500H1.500Z" /></NoticeIcon>
        </Tray>
      </Taskbar>
    </Window>
  );
}
